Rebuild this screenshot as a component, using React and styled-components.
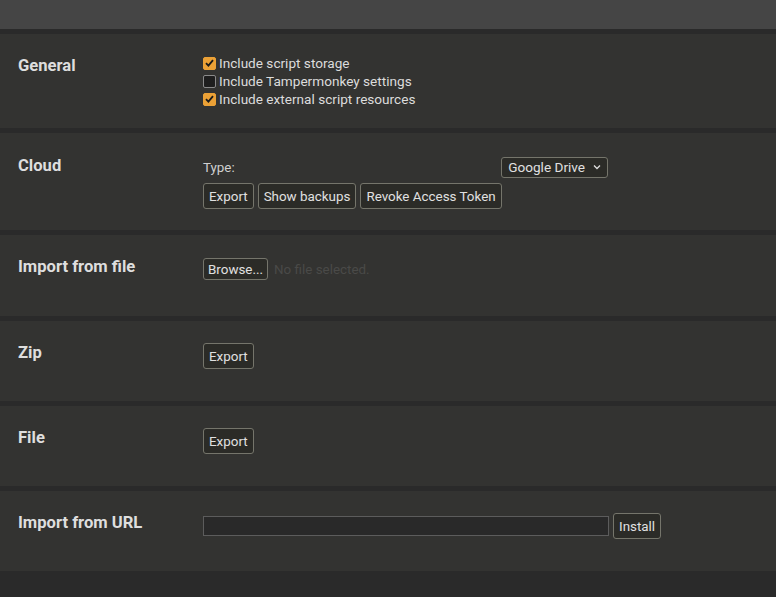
import React from "react";
import styled, { createGlobalStyle } from "styled-components";

const Global = createGlobalStyle`
  html, body { margin: 0; padding: 0; background: #2a2a2a; }
  body { font-family: Roboto, "Liberation Sans", sans-serif; color: #dcdcdc; }
  * { box-sizing: border-box; }
`;

const Page = styled.div`
  min-height: 597px;
  background: #2a2a2a;
`;

const TopBar = styled.div`
  height: 29px;
  background: #454545;
`;

const Sections = styled.div`
  display: flex;
  flex-direction: column;
  gap: 5px;
  padding-top: 5px;
`;

const Section = styled.section`
  display: grid;
  grid-template-columns: 185px 1fr;
  background: #333331;
  min-height: ${(p) => p.$mh || 80}px;
  padding: 20px 18px ${(p) => p.$pb || 20}px;
`;

const Label = styled.div`
  font-size: 16.6px;
  font-weight: 700;
  line-height: 18px;
  color: #dedede;
  padding-top: ${(p) => p.$pt || 0}px;
`;

const Content = styled.div`
  display: flex;
  flex-direction: column;
  font-size: 13.4px;
  padding-top: ${(p) => p.$pt || 0}px;
`;

const CheckRow = styled.label`
  display: flex;
  align-items: center;
  height: 18px;
  font-size: 13.6px;
  color: #dcdcdc;
`;

const Box = styled.span`
  width: 13px;
  height: 13px;
  margin-right: 3px;
  border-radius: 2px;
  display: inline-flex;
  align-items: center;
  justify-content: center;
  background: ${(p) => (p.$checked ? "#eba136" : "#1e1e1e")};
  border: 1px solid ${(p) => (p.$checked ? "#eba136" : "#8a8a8a")};
`;

const Row = styled.div`
  display: flex;
  align-items: center;
  gap: ${(p) => p.$gap ?? 4}px;
  margin-bottom: ${(p) => p.$mb || 0}px;
`;

const TypeRow = styled.div`
  display: flex;
  align-items: center;
  justify-content: space-between;
  width: 405px;
  height: 28px;
  margin-bottom: 2px;
  font-size: 13.4px;
  color: #d0d0d0;
`;

const Button = styled.button`
  font-family: Roboto, "Liberation Sans", sans-serif;
  font-size: 13.4px;
  color: #e0e0e0;
  background: #2b2b27;
  border: 1px solid #75756b;
  border-radius: 3px;
  height: ${(p) => p.$h || 26}px;
  padding: 0 ${(p) => p.$px || 5}px;
  margin: 0;
  cursor: pointer;
`;

const Select = styled.div`
  display: flex;
  align-items: center;
  gap: 8px;
  height: 21px;
  padding: 0 6px 0 6px;
  border: 1px solid #75756b;
  border-radius: 3px;
  background: #2b2b27;
  color: #e0e0e0;
  font-size: 13.6px;
`;

const Muted = styled.span`
  font-size: 13.4px;
  color: #4a4a48;
`;

const UrlInput = styled.input`
  width: 406px;
  height: 20px;
  background: #292929;
  border: 1px solid #5c5c5c;
  color: #ddd;
  padding: 0 4px;
  margin: 0;
`;

const Check = ({ checked, children }) => (
  <CheckRow>
    <Box $checked={checked}>
      {checked && (
        <svg width="9" height="8" viewBox="0 0 9 8">
          <path d="M1 4.2 L3.4 6.6 L8 1.2" fill="none" stroke="#1a1a1a" strokeWidth="1.8" />
        </svg>
      )}
    </Box>
    {children}
  </CheckRow>
);

export default function App() {
  return (
    <Page>
      <Global />
      <TopBar />
      <Sections>
        <Section>
          <Label $pt={3}>General</Label>
          <Content>
            <Check checked>Include script storage</Check>
            <Check>Include Tampermonkey settings</Check>
            <Check checked>Include external script resources</Check>
          </Content>
        </Section>
        <Section>
          <Label $pt={4}>Cloud</Label>
          <Content>
            <TypeRow>
              <span>Type:</span>
              <Select>
                Google Drive
                <svg width="8" height="6" viewBox="0 0 8 6">
                  <path d="M1 1.5 L4 4.5 L7 1.5" fill="none" stroke="#ddd" strokeWidth="1.3" />
                </svg>
              </Select>
            </TypeRow>
            <Row $mb={1}>
              <Button>Export</Button>
              <Button>Show backups</Button>
              <Button>Revoke Access Token</Button>
            </Row>
          </Content>
        </Section>
        <Section $mh={81}>
          <Label $pt={3}>Import from file</Label>
          <Content $pt={3}>
            <Row $gap={6}>
              <Button $h={22} $px={4}>Browse...</Button>
              <Muted>No file selected.</Muted>
            </Row>
          </Content>
        </Section>
        <Section>
          <Label $pt={3}>Zip</Label>
          <Content $pt={2}>
            <Row>
              <Button>Export</Button>
            </Row>
          </Content>
        </Section>
        <Section>
          <Label $pt={3}>File</Label>
          <Content $pt={2}>
            <Row>
              <Button>Export</Button>
            </Row>
          </Content>
        </Section>
        <Section>
          <Label $pt={3}>Import from URL</Label>
          <Content $pt={2}>
            <Row>
              <UrlInput type="text" />
              <Button $px={5}>Install</Button>
            </Row>
          </Content>
        </Section>
      </Sections>
    </Page>
  );
}
